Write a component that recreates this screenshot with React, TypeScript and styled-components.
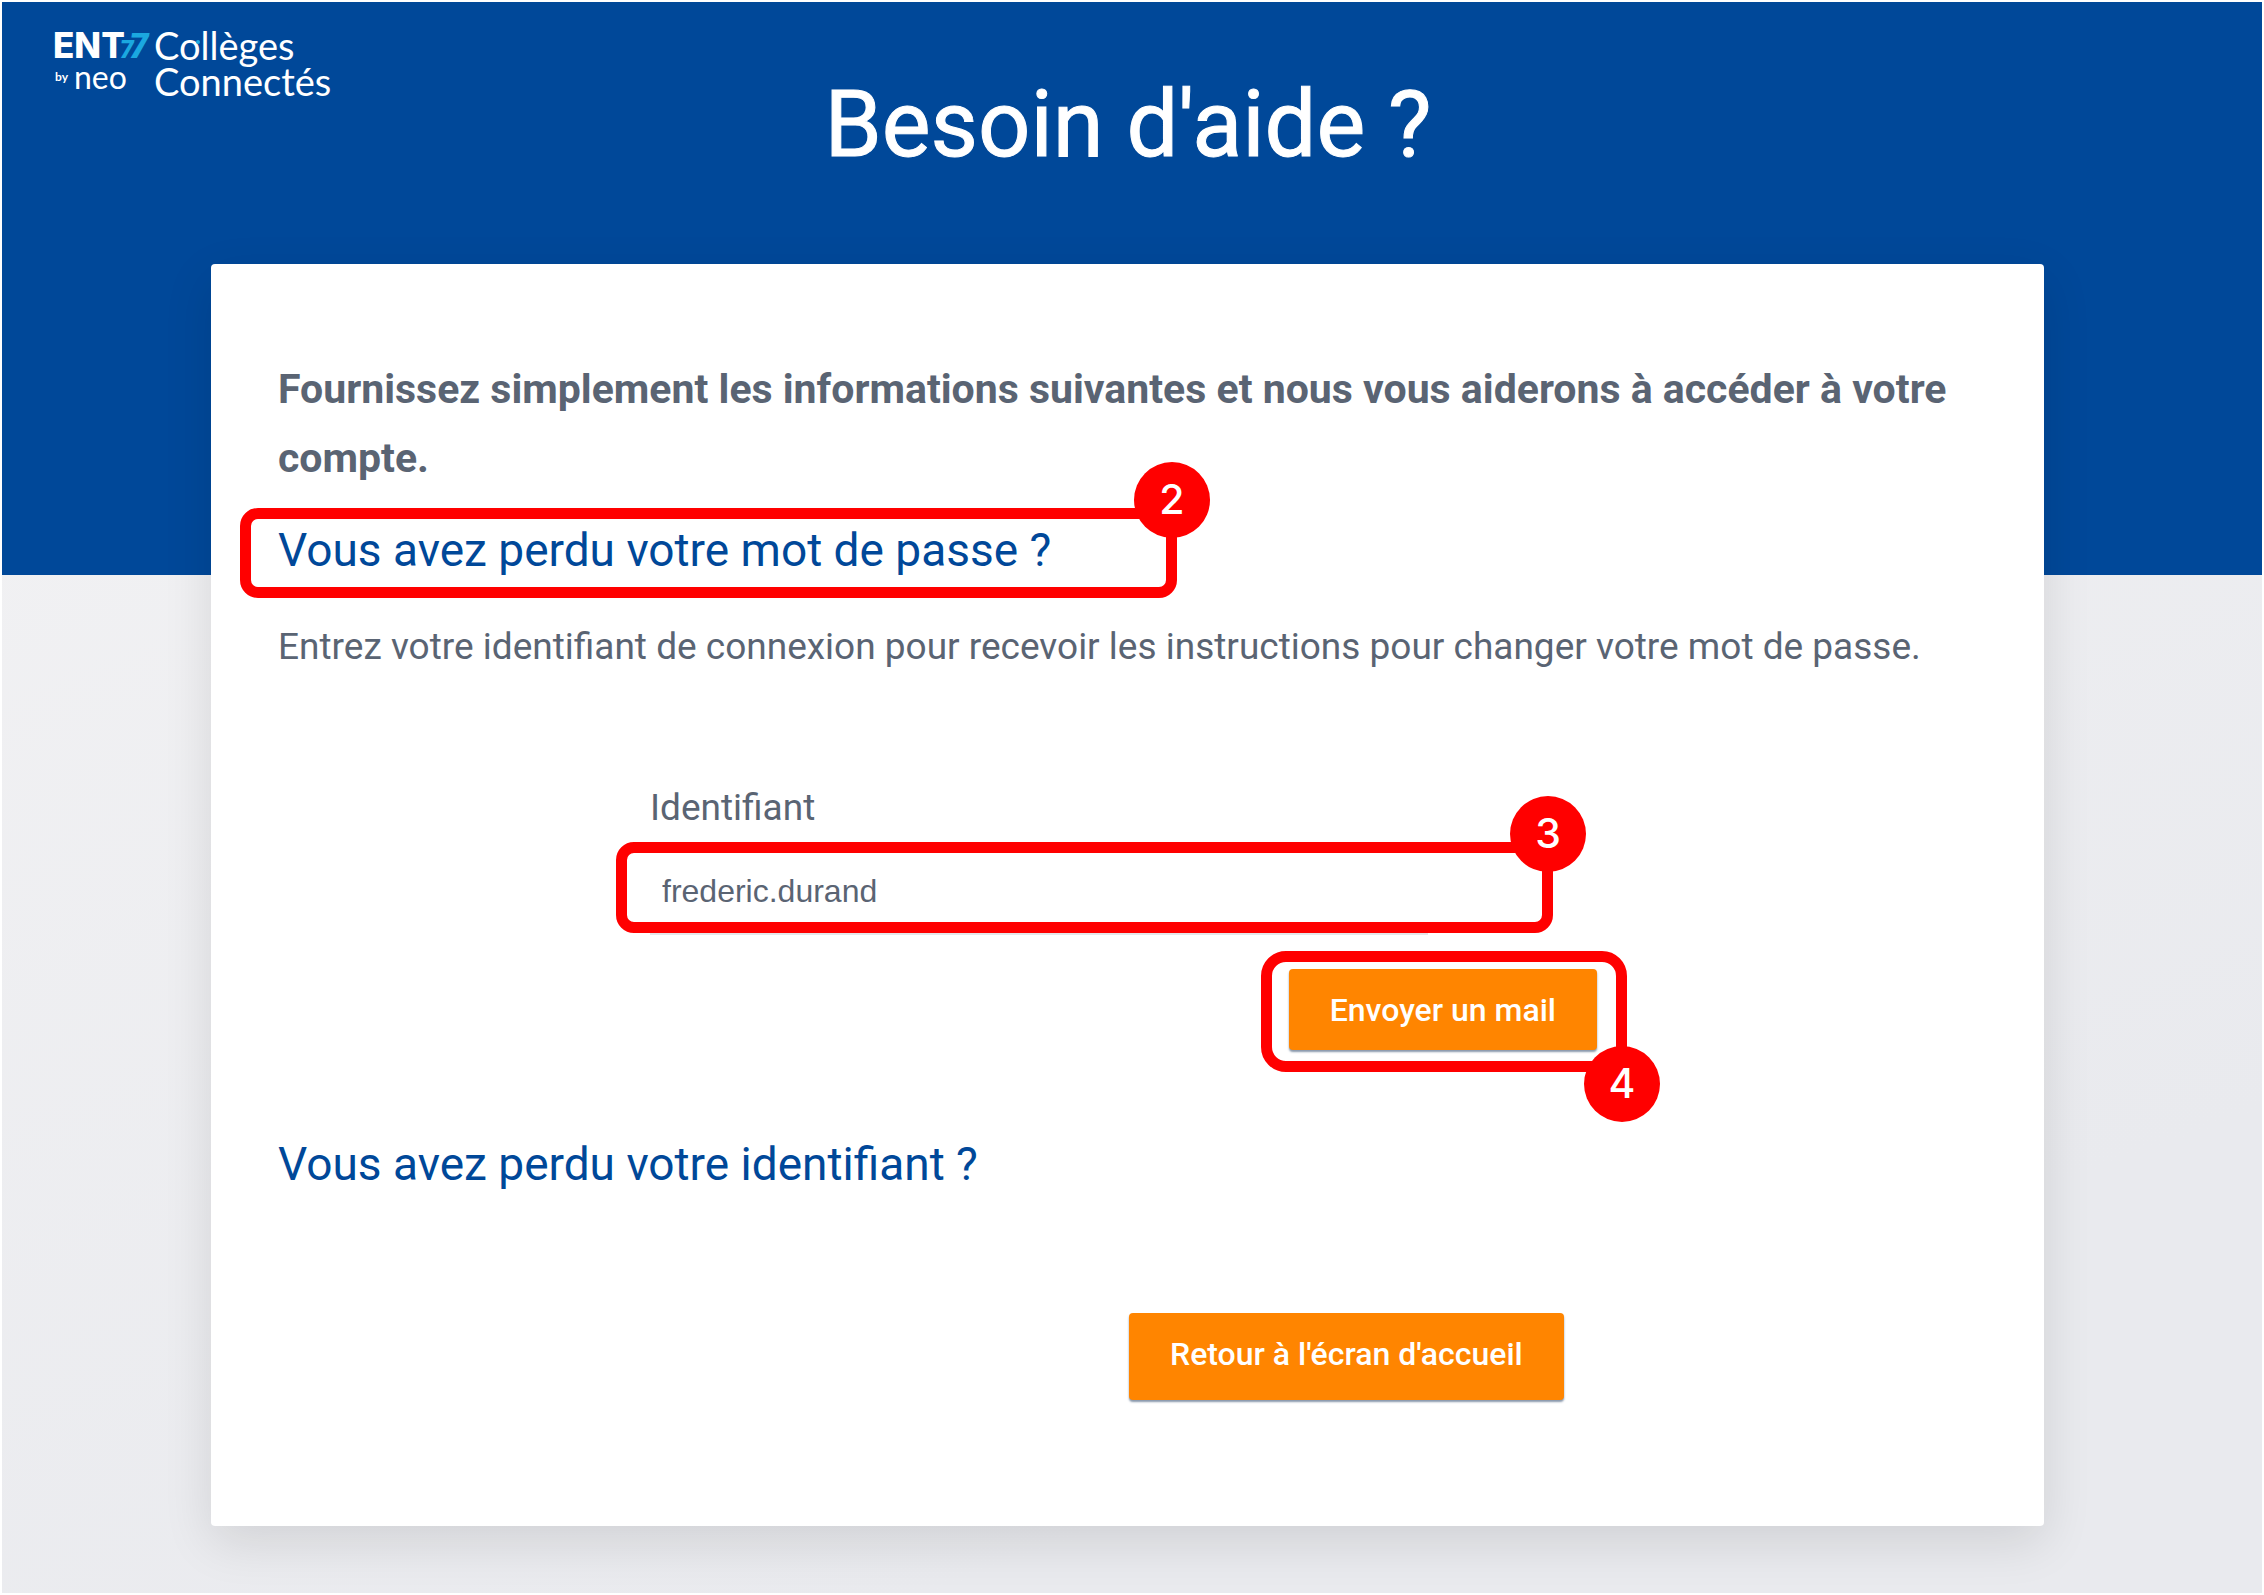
import React from "react";
import styled, { createGlobalStyle } from "styled-components";

const blue = "#004899";
const slate = "#5a6473";
const alert = "#ff0000";
const cyan = "#1ba8e0";

const GlobalStyle = createGlobalStyle`
  *, *::before, *::after { box-sizing: border-box; }
  body { margin: 0; background: #ffffff; }
  h1, h2, p { margin: 0; font-weight: 400; }
`;

const Page = styled.div`
  min-height: 100vh;
  border: 2px solid #ffffff;
  background: linear-gradient(160deg, #f1f1f3 20%, #e9eaee 80%);
  font-family: Roboto, "Liberation Sans", sans-serif;
  color: ${slate};
`;

const Hero = styled.header`
  position: relative;
  height: 573px;
  padding: 67px 8px 0 0;
  background: ${blue};
  text-align: center;
`;

const Title = styled.h1`
  font-size: 92px;
  line-height: 112px;
  -webkit-text-stroke: 1px #ffffff;
  color: #ffffff;
`;

const Logo = styled.a`
  position: absolute;
  top: 25px;
  left: 51px;
  display: flex;
  color: #ffffff;
  text-decoration: none;
  text-align: left;
  font-family: Lato, "Open Sans", sans-serif;
`;

const LogoMark = styled.span`
  display: flex;
  flex-direction: column;
  width: 101px;
`;

const Ent = styled.span`
  display: flex;
  align-items: baseline;
  font-family: Inter, sans-serif;
  font-size: 35px;
  line-height: 36px;
  font-weight: 800;
`;

const Seven = styled.span<{ $size: number }>`
  margin-left: -5px;
  color: ${cyan};
  font-family: Roboto, sans-serif;
  font-size: ${(p) => p.$size}px;
  line-height: 32px;
  font-weight: 900;
  font-style: italic;
`;

const ByNeo = styled.span`
  display: flex;
  align-items: center;
  gap: 6px;
  padding-left: 2px;
  font-size: 32px;
  line-height: 22px;
`;

const By = styled.span`
  font-size: 12px;
  line-height: 16px;
  font-weight: 700;
`;

const LogoName = styled.span`
  display: flex;
  flex-direction: column;
  font-size: 38px;
  line-height: 36px;
`;

const DottedO = styled.span`
  position: relative;

  &::after {
    content: "";
    position: absolute;
    top: 18px;
    right: 1px;
    width: 4px;
    height: 4px;
    border-radius: 50%;
    background: ${cyan};
  }
`;

const Main = styled.main`
  padding: 0 218px 67px 209px;
  margin-top: -311px;
  position: relative;
`;

const Card = styled.section`
  padding: 91px 67px 126px;
  border-radius: 4px;
  background: #ffffff;
  box-shadow: 0 16px 50px rgba(0, 0, 0, 0.11);
`;

const Intro = styled.p`
  font-size: 41px;
  line-height: 69px;
  font-weight: 700;
`;

const Step = styled.div<{ $width?: number; $top: number }>`
  position: relative;
  max-width: ${(p) => (p.$width ? `${p.$width}px` : "none")};
  margin-top: ${(p) => p.$top}px;
`;

const Heading = styled.h2`
  font-size: 46px;
  line-height: 60px;
  color: ${blue};
`;

const Help = styled.p`
  margin-top: 37px;
  font-size: 37px;
  line-height: 60px;
`;

const Form = styled.form`
  width: 947px;
  max-width: 100%;
  margin: 107px 0 0 372px;
`;

const Label = styled.label`
  display: block;
  font-size: 37px;
  line-height: 48px;
`;

const Field = styled.input`
  display: block;
  width: 778px;
  height: 87px;
  padding: 2px 12px 0;
  border: 0;
  border-bottom: 2px solid #e4e6e9;
  background: transparent;
  color: ${slate};
  font-family: "Liberation Sans", Arial, sans-serif;
  font-size: 32px;
  outline: none;
`;

const Actions = styled.div`
  display: flex;
  justify-content: flex-end;
`;

const Action = styled.button<{ $bottom: number }>`
  display: block;
  padding: 21px 41px ${(p) => p.$bottom}px;
  border: 0;
  border-radius: 4px;
  background: #ff8500;
  box-shadow: 0 2px 2px rgba(20, 50, 90, 0.5);
  color: #ffffff;
  font-family: inherit;
  font-size: 32px;
  line-height: 40px;
  font-weight: 500;
  cursor: pointer;
`;

const Return = styled.div`
  margin: 119px 0 0 851px;
`;

const Frame = styled.span<{ $inset: string; $radius: number }>`
  position: absolute;
  inset: ${(p) => p.$inset};
  border: 11px solid ${alert};
  border-radius: ${(p) => p.$radius}px;
  pointer-events: none;
`;

const Badge = styled.span<{ $bottom?: boolean }>`
  position: absolute;
  right: -44px;
  ${(p) => (p.$bottom ? "bottom: -61px;" : "top: -57px;")}
  width: 76px;
  height: 76px;
  border-radius: 50%;
  background: ${alert};
  color: #ffffff;
  font-family: Inter, "Liberation Sans", sans-serif;
  font-size: 41px;
  line-height: 74px;
  font-weight: 500;
  text-align: center;
`;

export default function App() {
  return (
    <>
      <GlobalStyle />
      <Page>
        <Hero>
          <Logo href="#">
            <LogoMark>
              <Ent>
                ENT
                <Seven $size={25}>7</Seven>
                <Seven $size={35}>7</Seven>
              </Ent>
              <ByNeo>
                <By>by</By>
                <span>neo</span>
              </ByNeo>
            </LogoMark>
            <LogoName>
              <span>
                C<DottedO>o</DottedO>llèges
              </span>
              <span>Connectés</span>
            </LogoName>
          </Logo>
          <Title>Besoin d'aide ?</Title>
        </Hero>
        <Main>
          <Card>
            <Intro>
              Fournissez simplement les informations suivantes et nous vous
              aiderons à accéder à votre compte.
            </Intro>
            <Step $width={899} $top={27}>
              <Heading>Vous avez perdu votre mot de passe ?</Heading>
              <Frame $inset="-12px 0 -18px -38px" $radius={18}>
                <Badge>2</Badge>
              </Frame>
            </Step>
            <Help>
              Entrez votre identifiant de connexion pour recevoir les
              instructions pour changer votre mot de passe.
            </Help>
            <Form onSubmit={(e) => e.preventDefault()}>
              <Label htmlFor="login">Identifiant</Label>
              <Step $top={16} $width={903}>
                <Field id="login" type="text" defaultValue="frederic.durand" />
                <Frame $inset="-6px 0 2px -34px" $radius={18}>
                  <Badge>3</Badge>
                </Frame>
              </Step>
              <Actions>
                <Step $top={34}>
                  <Action type="submit" $bottom={20}>
                    Envoyer un mail
                  </Action>
                  <Frame $inset="-18px -30px -22px -28px" $radius={25}>
                    <Badge $bottom>4</Badge>
                  </Frame>
                </Step>
              </Actions>
            </Form>
            <Step $top={84}>
              <Heading>Vous avez perdu votre identifiant ?</Heading>
            </Step>
            <Return>
              <Action type="button" $bottom={26}>
                Retour à l'écran d'accueil
              </Action>
            </Return>
          </Card>
        </Main>
      </Page>
    </>
  );
}
